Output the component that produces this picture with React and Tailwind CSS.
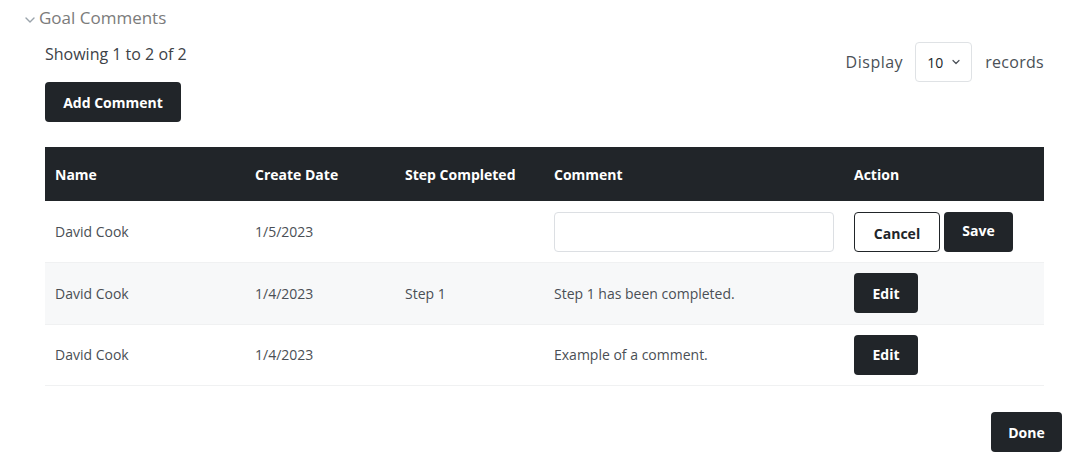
import React from 'react'

const rows = [
  { name: 'David Cook', date: '1/5/2023', step: '', comment: '', editing: true },
  { name: 'David Cook', date: '1/4/2023', step: 'Step 1', comment: 'Step 1 has been completed.' },
  { name: 'David Cook', date: '1/4/2023', step: '', comment: 'Example of a comment.' },
]

export default function App() {
  return (
    <div className="min-h-screen bg-white font-['Open_Sans','Noto_Sans',sans-serif] text-[#212529]">
      <div className="pl-[23px] pt-[6px]">
        {/* Section title */}
        <div className="flex items-center gap-[2px] text-[#7b7b7b]">
          <svg width="14" height="14" viewBox="0 0 14 14" fill="none" className="mt-[3px]">
            <path d="M3 5l4 4 4-4" stroke="#9aa3ab" strokeWidth="1.4" strokeLinecap="round" strokeLinejoin="round" />
          </svg>
          <span className="text-[17px] leading-[24px]">Goal Comments</span>
        </div>

        <div className="pl-[22px] pr-[36px]">
          {/* Toolbar */}
          <div className="flex justify-between">
            <div>
              <div className="mt-[13px] text-[16px] leading-[22px] text-[#3d4247]">Showing 1 to 2 of 2</div>
              <button className="mt-[17px] h-[40px] w-[136px] rounded-[4px] bg-[#212529] text-[14px] font-bold text-white">
                Add Comment
              </button>
            </div>
            <div className="mt-[12px] flex h-[40px] items-center text-[16px] text-[#4a5057]">
              <span className="mr-[12px] tracking-[0.5px]">Display</span>
              <div className="flex h-[40px] w-[57px] items-center justify-between rounded-[4px] border border-[#dfe2e5] pl-[11px] pr-[10px] text-[14px] text-[#212529]">
                <span>10</span>
                <svg width="10" height="10" viewBox="0 0 10 10" fill="none">
                  <path d="M2 3.5l3 3 3-3" stroke="#4a5057" strokeWidth="1.2" strokeLinecap="round" strokeLinejoin="round" />
                </svg>
              </div>
              <span className="ml-[13px] tracking-[0.3px]">records</span>
            </div>
          </div>

          {/* Table */}
          <table className="mt-[25px] w-[999px] table-fixed border-collapse text-left text-[14px]">
            <colgroup>
              <col className="w-[200px]" />
              <col className="w-[150px]" />
              <col className="w-[149px]" />
              <col className="w-[300px]" />
              <col className="w-[200px]" />
            </colgroup>
            <thead>
              <tr className="h-[54px] bg-[#212529] text-white">
                <th className="pl-[10px] font-bold">Name</th>
                <th className="pl-[10px] font-bold">Create Date</th>
                <th className="pl-[10px] font-bold">Step Completed</th>
                <th className="pl-[10px] font-bold">Comment</th>
                <th className="pl-[10px] font-bold">Action</th>
              </tr>
            </thead>
            <tbody className="text-[#4a4f55]">
              {rows.map((r, i) => (
                <tr key={i} className={`h-[61.5px] border-b border-[#f0f1f2] ${i === 1 ? 'bg-[#f7f8f9]' : 'bg-white'}`}>
                  <td className="pl-[10px]">{r.name}</td>
                  <td className="pl-[10px]">{r.date}</td>
                  <td className="pl-[10px]">{r.step}</td>
                  <td className="pl-[10px]">
                    {r.editing ? (
                      <input className="h-[40px] w-[280px] rounded-[4px] border border-[#dcdfe3] px-3 outline-none" />
                    ) : (
                      r.comment
                    )}
                  </td>
                  <td className="pl-[10px]">
                    {r.editing ? (
                      <div className="flex gap-[4px]">
                        <button className="h-[40px] w-[86px] rounded-[4px] border border-[#212529] bg-white pt-[4px] font-bold text-[#212529]">
                          Cancel
                        </button>
                        <button className="h-[40px] w-[69px] rounded-[4px] bg-[#212529] pb-[2px] font-bold text-white">
                          Save
                        </button>
                      </div>
                    ) : (
                      <button className="h-[40px] w-[64px] rounded-[4px] bg-[#212529] font-bold text-white">Edit</button>
                    )}
                  </td>
                </tr>
              ))}
            </tbody>
          </table>
        </div>

        {/* Footer */}
        <div className="flex justify-end pr-[18px] pt-[26px]">
          <button className="h-[40px] w-[71px] rounded-[4px] bg-[#212529] text-[14px] font-bold text-white">Done</button>
        </div>
      </div>
    </div>
  )
}
